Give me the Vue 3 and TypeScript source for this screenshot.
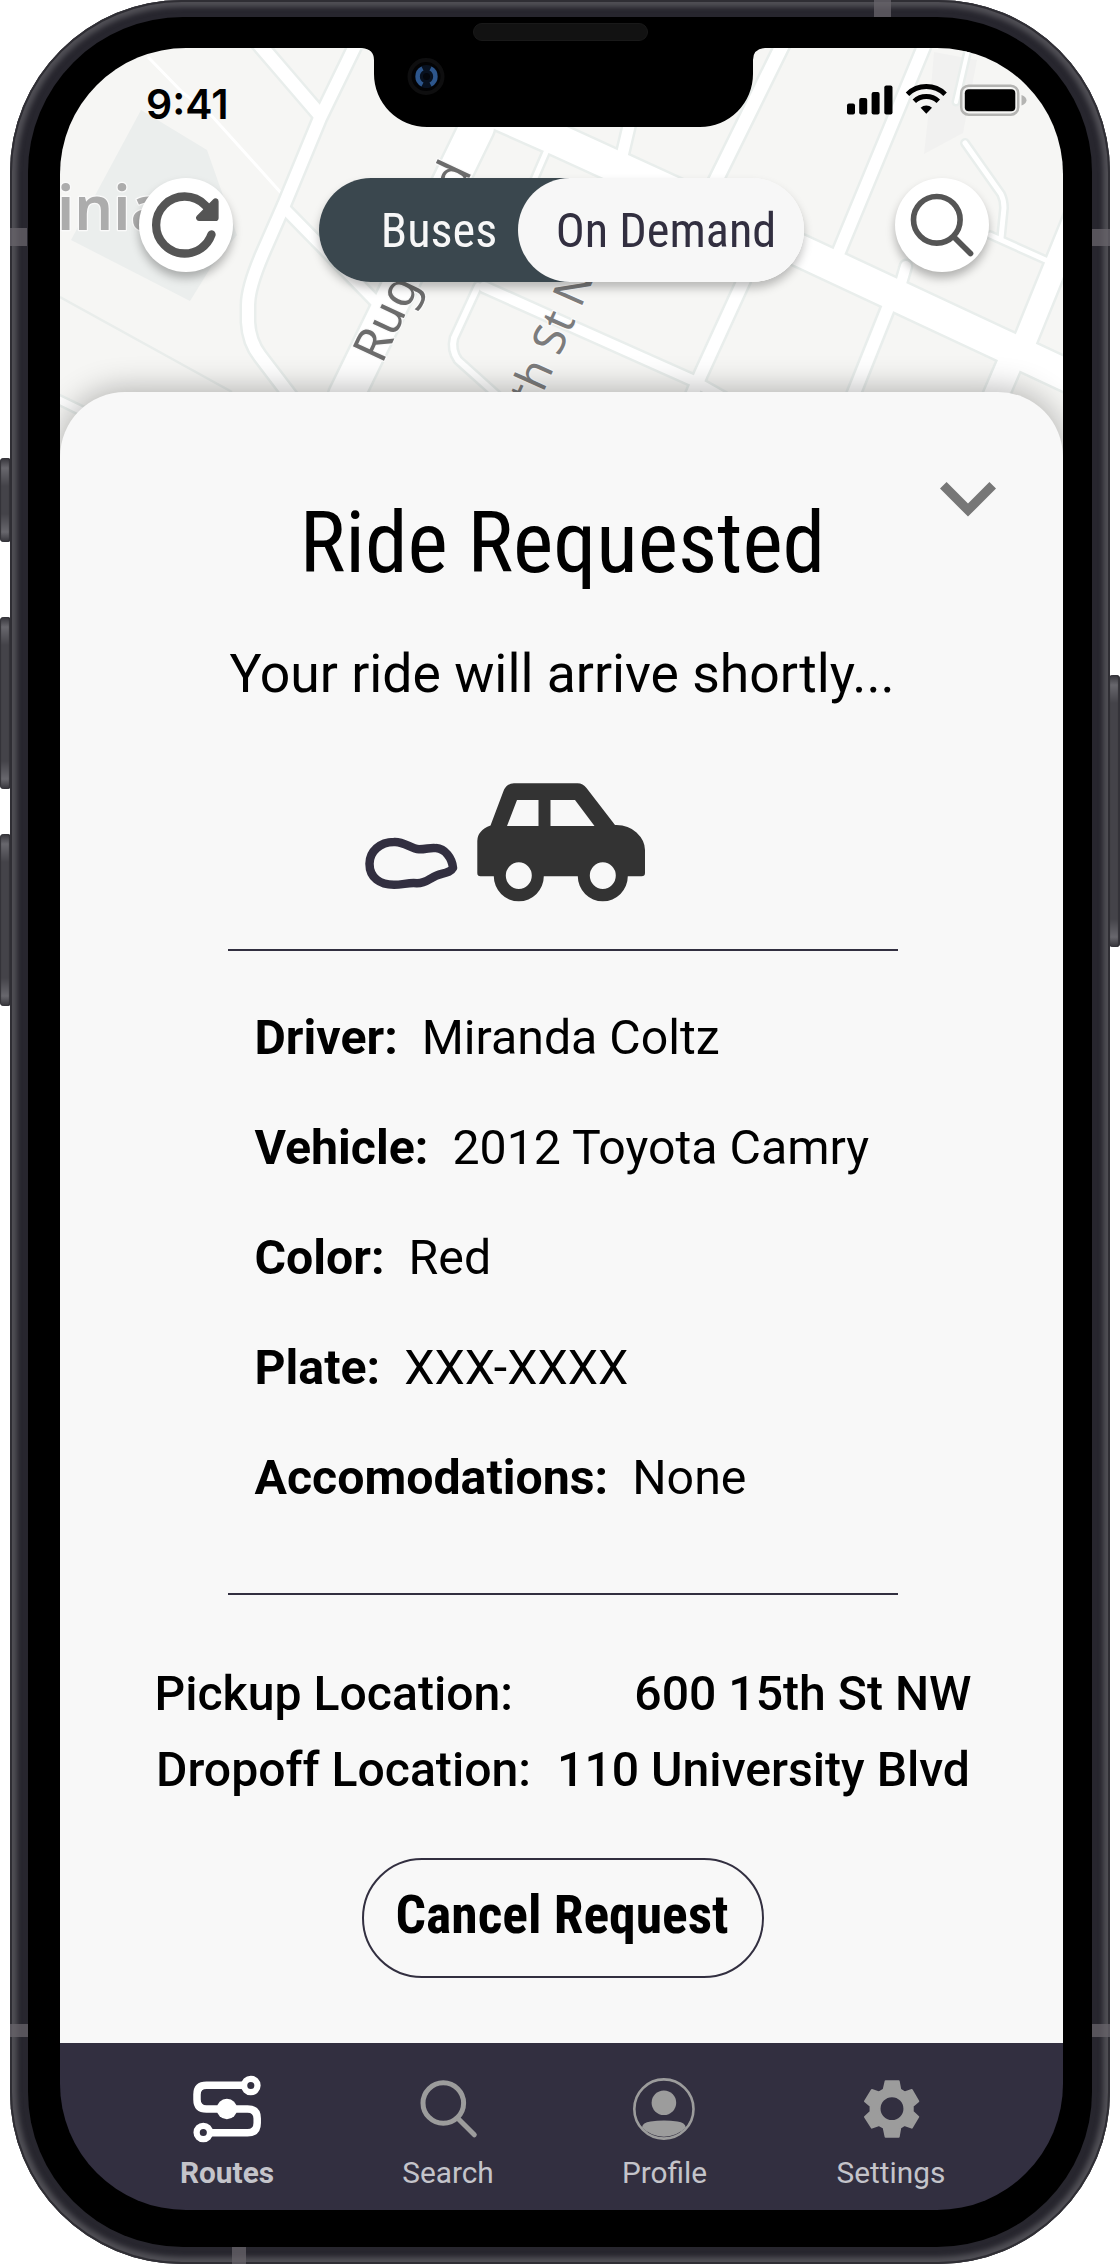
<script setup lang="ts">
interface Detail {
  label: string
  value: string
}

interface Trip {
  label: string
  place: string
}

const details: Detail[] = [
  { label: 'Driver:', value: 'Miranda Coltz' },
  { label: 'Vehicle:', value: '2012 Toyota Camry' },
  { label: 'Color:', value: 'Red' },
  { label: 'Plate:', value: 'XXX-XXXX' },
  { label: 'Accomodations:', value: 'None' },
]

const trips: Trip[] = [
  { label: 'Pickup Location:', place: '600 15th St NW' },
  { label: 'Dropoff Location:', place: '110 University Blvd' },
]

const roads: { d: string; w: number }[] = [
  { d: 'M259 44L320 115', w: 13 },
  { d: 'M356 44L320 118L284 205L262 255Q248 288 248 305V322Q249 342 260 356L292 398', w: 12 },
  { d: 'M284 208L376 302', w: 10 },
  { d: 'M477 127L346 396', w: 34 },
  { d: 'M440 88L560 141L803 252L1000 344L1070 377', w: 31 },
  { d: 'M783 44L715 182', w: 13 },
  { d: 'M630 122L622 156', w: 11 },
  { d: 'M925 44L838 254', w: 12 },
  { d: 'M968 50L956 102', w: 4 },
  { d: 'M965 143L1001 194Q1004 200 1004 208L1001 238', w: 5 },
  { d: 'M990 235L1050 262', w: 5 },
  { d: 'M1075 218L1023 346', w: 22 },
  { d: 'M906 266L899 290', w: 10 },
  { d: 'M888 308L852 398', w: 12 },
  { d: 'M1012 358L994 400', w: 24 },
  { d: 'M744 280L701 374L690 400', w: 12 },
  { d: 'M484 287L560 321L692 380L724 398', w: 10 },
  { d: 'M478 286L454 338Q451 350 458 360L498 396', w: 6 },
  { d: 'M547 150L534 180', w: 5 },
  { d: 'M55 398L84 412', w: 7 },
]
</script>

<template>
  <main class="stage">
    <i class="key key-mute"></i>
    <i class="key key-up"></i>
    <i class="key key-down"></i>
    <i class="key key-power"></i>

    <div class="frame">
      <i class="band band-top"></i>
      <i class="band band-bottom"></i>
      <i class="band band-lt"></i>
      <i class="band band-rt"></i>
      <i class="band band-lb"></i>
      <i class="band band-rb"></i>

      <div class="bezel">
        <div class="screen">
          <svg class="map" viewBox="60 48 1003 440" width="1003" height="440">
            <rect x="60" y="48" width="1003" height="440" fill="#f6f6f4" />
            <path d="M141 110L207 150L237 235L211 267L190 301L71 240Z" fill="#ebeeed" />
            <path d="M934 52L977 60L963 133L924 154L930 100Z" fill="#f1f1f0" />
            <path d="M60 297L232 392" stroke="#e9edeb" stroke-width="2.5" />
            <path d="M148 57L182 92L211 115L282 194" fill="none" stroke="#fff" stroke-width="3" />
            <g fill="none" stroke="#e9eeec" stroke-linecap="round">
              <path v-for="(r, i) in roads" :key="'c' + i" :d="r.d" :stroke-width="r.w + 5" />
            </g>
            <g fill="none" stroke="#ffffff" stroke-linecap="round">
              <path v-for="(r, i) in roads" :key="'r' + i" :d="r.d" :stroke-width="r.w" />
            </g>
            <g class="map-text">
              <text x="57" y="230" font-size="61" font-weight="600" letter-spacing="0" fill="#acacac">inia</text>
              <text transform="translate(382 365) rotate(-65)" font-size="48" fill="#6c6c6c">Rugby Rd</text>
              <text transform="translate(536.5 408) rotate(-66)" font-size="45" fill="#7c7c7c">th St NW</text>
            </g>
          </svg>

          <header class="top">
            <div class="status">
              <span class="clock">9:41</span>
              <svg class="status-icons" viewBox="846 80 182 38" width="182" height="38">
                <rect x="847" y="103.5" width="8" height="11" rx="2" />
                <rect x="859.2" y="98" width="8" height="16.5" rx="2" />
                <rect x="871.6" y="92" width="8" height="22.5" rx="2" />
                <rect x="884.3" y="85.5" width="8.2" height="29" rx="2" />
                <g fill="none" stroke="#000" stroke-width="5">
                  <path d="M907.5 94.2a27 27 0 0 1 37.600 0" />
                  <path d="M914.300 101.300a17.500 17.500 0 0 1 24 0" />
                </g>
                <path d="M926.300 113.800l-5.700-6a8.500 8.500 0 0 1 11.400 0z" />
                <rect x="961.2" y="85.700" width="57" height="29" rx="7.500" fill="none" stroke="#b4b4b2" stroke-width="2.500" />
                <rect x="964.800" y="89.200" width="50.500" height="22" rx="4" />
                <path d="M1021.500 95v10.500q5-1.800 5-5.200t-5-5.300z" fill="#b4b4b2" />
              </svg>
            </div>

            <div class="controls">
              <button class="round round-refresh" aria-label="Refresh">
                <svg viewBox="0 0 512 512" width="76" height="76">
                  <path d="M400 148l-21.120-24.570A191.430 191.430 0 0 0 240 64C134 64 48 150 48 256s86 192 192 192a192.090 192.090 0 0 0 181.070-128" fill="none" stroke="#555" stroke-width="56" stroke-linecap="round" />
                  <path d="M464 97.420V208a16 16 0 0 1-16 16H337.420c-14.260 0-21.390-17.230-11.310-27.310L436.690 86.110C446.770 76 464 83.160 464 97.420z" fill="#555" stroke="#555" stroke-width="10" />
                </svg>
              </button>
              <div class="toggle">
                <span class="opt opt-off">Buses</span>
                <span class="opt opt-on">On Demand</span>
              </div>
              <button class="round" aria-label="Search">
                <svg viewBox="0 0 512 512" width="76" height="76">
                  <g fill="none" stroke="#555" stroke-width="38" stroke-linecap="round">
                    <circle cx="221" cy="221" r="157" />
                    <path d="M338 338L448 448" />
                  </g>
                </svg>
              </button>
            </div>
          </header>

          <section class="sheet">
            <button class="collapse" aria-label="Collapse">
              <svg viewBox="6 8.590 12 7.410" width="56" height="34.600">
                <path d="M7.410 8.590L12 13.170l4.590-4.580L18 10l-6 6-6-6z" fill="#777" />
              </svg>
            </button>

            <h1>Ride Requested</h1>
            <p class="sub">Your ride will arrive shortly...</p>

            <svg class="car" viewBox="227 770 670 140" width="670" height="140">
              <path
                d="M394 841.200C404 840.500 411 848 419 848.500C427 848.500 430 846.500 436 847.300C445 848 452 857 453 867C450 873 440 872 432 877C427 880 424 882.500 417 882.500C409 881.500 403 884 394 884C380 884 369.500 877 369.500 863C369.500 850.500 380 841.200 394 841.200Z"
                transform="translate(0 0.800)"
                fill="none" stroke="#322f40" stroke-width="8.500" stroke-linejoin="round"
              />
              <path
                fill="#333" fill-rule="evenodd"
                d="M514 783.300H577.500Q583 783.300 586.500 788L615 825Q628 824.500 636.500 832.500Q645 840.500 645 850V873Q645 876.300 641.500 876.300H627.800A25 25 0 0 1 577.800 876.300H543.800A25 25 0 0 1 493.800 876.300H480.500Q477.300 876.300 477.300 873V841Q477.300 830.500 490.500 825.500L503.500 791Q506.500 783.300 514 783.300ZM517 800L507 826H538.500V800ZM550.500 800V826H594.500L575 800ZM518.800 862.300A13 13.300 0 1 0 518.800 888.900A13 13.300 0 1 0 518.800 862.300ZM602.800 862.300A13 13.300 0 1 0 602.800 888.900A13 13.300 0 1 0 602.800 862.300Z"
              />
            </svg>

            <hr>

            <dl class="details">
              <div v-for="d in details" :key="d.label" class="detail">
                <dt>{{ d.label }}</dt>
                <dd>{{ d.value }}</dd>
              </div>
            </dl>

            <hr>

            <div class="trips">
              <div v-for="t in trips" :key="t.label" class="trip">
                <span>{{ t.label }}</span>
                <span>{{ t.place }}</span>
              </div>
            </div>

            <button class="cancel">Cancel Request</button>
          </section>

          <nav class="tabs">
            <a class="tab tab-active">
              <svg viewBox="191.500 2073.500 70 70" width="70" height="70">
                <g fill="none" stroke="#fff">
                  <path d="M242 2084.800H206Q196.500 2084.800 196.500 2094V2099Q196.500 2108.500 206 2108.500H247Q256.700 2108.500 256.700 2118V2122.500Q256.700 2132.300 247 2132.300H211" stroke-width="7.500" />
                  <circle cx="250.300" cy="2085" r="6.700" stroke-width="6.300" />
                  <circle cx="202.800" cy="2132" r="6.700" stroke-width="6.300" />
                </g>
                <circle cx="226.400" cy="2108.500" r="10.200" fill="#fff" />
              </svg>
              <span>Routes</span>
            </a>
            <a class="tab tab-search">
              <svg viewBox="413 2073.500 70 70" width="70" height="70">
                <g fill="none" stroke="#9c9c9c" stroke-width="5" stroke-linecap="round">
                  <circle cx="443.300" cy="2102.500" r="20.300" />
                  <path d="M458 2118L474.300 2134.300" />
                </g>
              </svg>
              <span>Search</span>
            </a>
            <a class="tab tab-profile">
              <svg viewBox="629.500 2073.500 70 70" width="70" height="70">
                <circle cx="663.400" cy="2108.500" r="29.600" fill="none" stroke="#9c9c9c" stroke-width="2.600" />
                <circle cx="663.400" cy="2102.300" r="12.300" fill="#9c9c9c" />
                <path d="M641.500 2127Q642 2121.800 650 2121Q663.400 2119 677 2121Q684.700 2121.800 685.300 2127A30.500 30.500 0 0 1 641.500 2127Z" fill="#9c9c9c" />
              </svg>
              <span>Profile</span>
            </a>
            <a class="tab tab-settings">
              <svg viewBox="888.500 72 210 214" width="70" height="71.300">
                <path
                  fill="#9c9c9c" stroke="#9c9c9c" stroke-width="6" stroke-linejoin="round" fill-rule="evenodd"
                  d="M977 94H1017L1022 120L1035 128L1057 121L1077 155L1060 170V187L1077 203L1057 236L1035 228L1022 236L1017 264H977L971 236L957 228L935 236L914 203L931 187V170L914 155L935 121L957 128L971 120ZM996.500 140A38 38 0 1 0 996.500 216A38 38 0 1 0 996.500 140Z"
                />
              </svg>
              <span>Settings</span>
            </a>
          </nav>
        </div>

        <svg class="notch" viewBox="362 46 403 82" width="403" height="82">
          <path d="M362 46V48Q374 49 374 60V74A53 53 0 0 0 427 127H700A53 53 0 0 0 753 74V60Q753 49 765 48V46Z" fill="#000" />
          <circle cx="426" cy="76.500" r="16.500" fill="#030304" stroke="#0e0e0f" stroke-width="4" />
          <circle cx="426.500" cy="76.500" r="11.500" fill="#08111f" />
          <path d="M422.500 68.500A9 9 0 0 0 422.500 84.500M430.500 68.500A9 9 0 0 1 430.500 84.500" fill="none" stroke="#2d568c" stroke-width="4.500" />
          <circle cx="426.500" cy="76.500" r="3.500" fill="#04070d" />
        </svg>
        <i class="speaker"></i>
      </div>
    </div>
  </main>
</template>

<style>
body {
  background: #fff;
}
</style>

<style scoped>
.stage {
  position: relative;
  box-sizing: border-box;
  width: 1120px;
  height: 2264px;
  padding: 0 10px;
  overflow: hidden;
  font-family: Roboto, "Liberation Sans", sans-serif;
  color: #000;
}

button {
  padding: 0;
  border: 0;
  font: inherit;
  color: inherit;
}

/* Phone body */
.frame {
  position: relative;
  box-sizing: border-box;
  width: 1100px;
  height: 2264px;
  padding: 17px 18px;
  border-radius: 172px;
  background: #27262e;
  box-shadow: inset 0 0 0 2px #2f2e34, inset 0 0 5px 7px #504f55;
}

.bezel {
  position: relative;
  box-sizing: border-box;
  height: 2230px;
  padding: 31px 29px 37px 32px;
  border-radius: 155px;
  background: #000;
}

.screen {
  position: relative;
  display: flex;
  flex-direction: column;
  width: 1003px;
  height: 2162px;
  overflow: hidden;
  border-radius: 126px;
  background: #000;
}

.band {
  position: absolute;
  background: #68646b;
  opacity: 0.75;
}

.band-top { top: 0; left: 864px; width: 17px; height: 17px; }
.band-bottom { bottom: 0; left: 222px; width: 14px; height: 17px; }
.band-lt { left: 0; top: 228px; width: 17px; height: 18px; }
.band-rt { right: 0; top: 229px; width: 18px; height: 17px; }
.band-lb { left: 0; top: 2024px; width: 18px; height: 13px; }
.band-rb { right: 0; top: 2024px; width: 18px; height: 13px; }

.key {
  position: absolute;
  left: 0;
  width: 11px;
  border-radius: 4px;
  background: linear-gradient(#35343a, #68676d 10px, #444349 28px, #444349 calc(100% - 28px), #68676d calc(100% - 10px), #35343a);
  box-shadow: inset 1px 0 1px #333238, inset -2px 0 1px #333238;
}

.key-mute { top: 458px; height: 84px; }
.key-up { top: 617px; height: 172px; }
.key-down { top: 834px; height: 172px; }
.key-power { left: auto; right: 0; top: 675px; height: 272px; }

.notch {
  position: absolute;
  left: 334px;
  top: 29px;
}

.speaker {
  position: absolute;
  left: 444.500px;
  top: 6px;
  box-sizing: border-box;
  width: 175px;
  height: 18px;
  border: 1px solid #191919;
  border-radius: 9px;
  background: #121212;
}

/* Map and floating controls */
.map {
  position: absolute;
  left: 0;
  top: 0;
}

.map-text {
  font-family: "Noto Sans", "Open Sans", sans-serif;
  stroke: #fafafa;
  stroke-width: 2.500px;
  stroke-linejoin: round;
  paint-order: stroke;
}

.top {
  position: relative;
  height: 344px;
  flex: none;
}

.status {
  display: flex;
  justify-content: space-between;
  align-items: flex-start;
  box-sizing: border-box;
  height: 130px;
  padding: 32px 35px 0 86px;
}

.clock {
  font: 600 41px/49px Inter, sans-serif;
}

.controls {
  display: flex;
  justify-content: space-between;
  align-items: flex-start;
  padding: 0 74px 0 79px;
}

.round {
  display: flex;
  align-items: center;
  justify-content: center;
  width: 94px;
  height: 94px;
  border-radius: 50%;
  background: #fff;
  box-shadow: 0 6px 10px rgba(0, 0, 0, 0.28);
}

.round-refresh {
  box-sizing: border-box;
  padding-left: 2px;
}

.toggle {
  display: flex;
  box-sizing: border-box;
  width: 485px;
  height: 104px;
  margin-right: 5px;
  border-radius: 52px;
  background: linear-gradient(90deg, #3a474e 60%, #f7f7f7 60%);
  box-shadow: 0 6px 10px rgba(0, 0, 0, 0.25);
}

.opt {
  box-sizing: border-box;
  height: 104px;
  font: 400 48.300px/106px "Roboto Condensed", Roboto, sans-serif;
  font-stretch: 75%;
  text-align: center;
}

.opt-off {
  width: 199px;
  padding-left: 41px;
  color: #f7f7f7;
}

.opt-on {
  width: 286px;
  padding-left: 10px;
  border-radius: 52px;
  background: #f7f7f7;
  color: #322f40;
}

/* Bottom sheet */
.sheet {
  position: relative;
  display: flex;
  flex-direction: column;
  align-items: center;
  flex: 1;
  border-radius: 65px 65px 0 0;
  background: #f8f8f8;
  box-shadow: 0 -2px 32px rgba(0, 0, 0, 0.3);
}

.collapse {
  align-self: flex-end;
  height: 34.600px;
  margin: 90px 67.500px 0 0;
  background: none;
  line-height: 0;
}

h1 {
  margin: -24px 0 0 2px;
  font: 400 85.800px/100px "Roboto Condensed", Roboto, sans-serif;
  font-stretch: 75%;
}

.sub {
  margin: 49px 0 0 1px;
  font-size: 53.500px;
  line-height: 64px;
}

.car {
  margin-top: 64.400px;
}

hr {
  width: 669.500px;
  height: 2px;
  margin: 39.500px 0 0 3px;
  border: 0;
  background: #322f40;
}

.details {
  display: flex;
  flex-direction: column;
  gap: 54px;
  align-self: flex-start;
  margin: 58.500px 0 47.500px 194.500px;
}

.detail {
  display: flex;
  gap: 24px;
  font-size: 48.250px;
  line-height: 56px;
  white-space: nowrap;
}

dt {
  font-weight: 700;
}

dd {
  margin: 0;
}

.trips {
  width: 817px;
  margin: 61.500px 0 0 3px;
}

.trip {
  display: flex;
  justify-content: space-between;
  font-size: 48.150px;
  font-weight: 500;
  line-height: 75.400px;
  white-space: nowrap;
}

.trip:last-child {
  padding: 0 1.500px 0 1.500px;
}

.cancel {
  box-sizing: border-box;
  width: 402.500px;
  height: 120px;
  margin: 51px 0 0 3px;
  padding: 0 2px 7px 0;
  border: 2px solid #322f40;
  border-radius: 60px;
  background: transparent;
  font: 700 53.600px/60px "Roboto Condensed", Roboto, sans-serif;
  font-stretch: 75%;
}

/* Tab bar */
.tabs {
  display: flex;
  position: relative;
  box-sizing: border-box;
  height: 167.500px;
  flex: none;
  padding: 31px 0 0 107px;
  background: #322f40;
}

.tab {
  display: flex;
  flex-direction: column;
  align-items: center;
  gap: 11px;
  width: 120px;
  font-size: 29.800px;
  line-height: 36px;
  color: #c4c4ca;
}

.tab svg {
  height: 70px;
}

.tab-active { font-weight: 700; }
.tab-search { margin-left: 101px; }
.tab-profile { margin-left: 96.500px; }
.tab-settings { margin-left: 106.500px; }
</style>
